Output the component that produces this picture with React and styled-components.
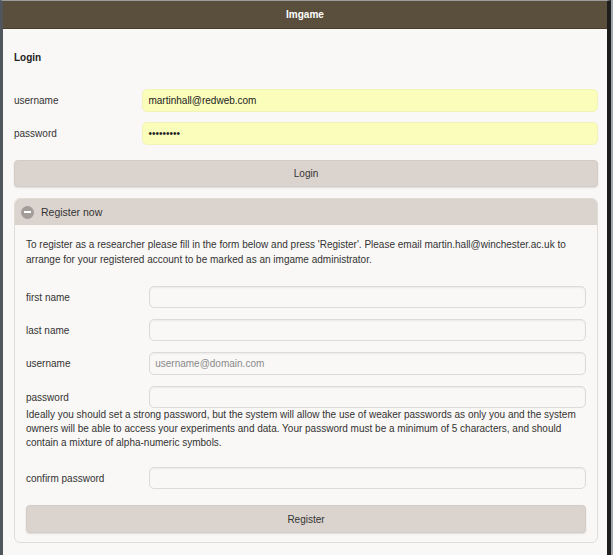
import React from "react";
import styled, { createGlobalStyle } from "styled-components";

const GlobalStyle = createGlobalStyle`
  html, body {
    margin: 0;
    padding: 0;
    background: #a4a9ae;
  }
  body {
    font-family: "Liberation Sans", Arial, sans-serif;
    color: #333;
  }
`;

const Window = styled.div`
  width: 604px;
  height: 554px;
  margin-right: 2px;
  border-top: 1px solid #9c9c9c;
  border-left: 3px solid #51565c;
  border-right: 4px solid #1d1d1d;
  background: #f9f8f6;
  display: flex;
  flex-direction: column;
  overflow: hidden;
`;

const TopBar = styled.header`
  height: 27px;
  background: #5a4f3c;
  border-bottom: 1px solid #463d2e;
  display: flex;
  align-items: center;
  justify-content: center;
  color: #fff;
  font-weight: bold;
  font-size: 10px;
`;

const Content = styled.main`
  padding: 22px 9px 0 11px;
  display: flex;
  flex-direction: column;
`;

const Heading = styled.h2`
  margin: 0 0 25px;
  font-size: 10px;
  line-height: 13px;
  font-weight: bold;
  color: #222;
`;

const Field = styled.div`
  display: flex;
  align-items: center;
  margin-bottom: ${p => p.$gap ?? 10}px;
`;

const Label = styled.label`
  width: 22%;
  flex-shrink: 0;
  font-size: 10px;
  color: #333;
`;

const Input = styled.input`
  flex: 1;
  min-width: 0;
  box-sizing: border-box;
  height: ${p => (p.$tall ? 23 : 22)}px;
  padding: 0 5px;
  font-family: inherit;
  font-size: 10px;
  color: #222;
  border-radius: 5px;
  outline: none;
  border: 1px solid ${p => (p.$filled ? "#f2f3b6" : "#dddbd8")};
  background: ${p => (p.$filled ? "#fbfdbb" : "#f9f8f6")};
  box-shadow: ${p => (p.$filled ? "none" : "inset 0 1px 2px rgba(0,0,0,0.06)")};

  &::placeholder {
    color: #8a8a8a;
  }
`;

const Button = styled.button`
  box-sizing: border-box;
  width: 100%;
  height: ${p => p.$h || 27}px;
  border: 1px solid #d3cbc5;
  border-radius: 4px;
  background: #dbd3ce;
  box-shadow: 0 1px 2px rgba(0, 0, 0, 0.12);
  font-family: inherit;
  font-size: 10px;
  color: #333;
  margin-top: ${p => p.$mt || 0}px;
`;

const Panel = styled.section`
  margin-top: 11px;
  border: 1px solid #e0ddd9;
  border-radius: 6px;
  overflow: hidden;
`;

const PanelHead = styled.div`
  height: 26px;
  background: #dbd3ce;
  display: flex;
  align-items: center;
  padding-left: 6px;
  gap: 7px;
  font-size: 10.5px;
  color: #333;
`;

const MinusIcon = styled.span`
  width: 13px;
  height: 13px;
  border-radius: 50%;
  background: #a29d98;
  position: relative;

  &::after {
    content: "";
    position: absolute;
    left: 3px;
    right: 3px;
    top: 5.5px;
    height: 2px;
    background: #fff;
  }
`;

const PanelBody = styled.div`
  padding: 12px 11px 9px;
  display: flex;
  flex-direction: column;
`;

const Text = styled.p`
  margin: ${p => p.$m || "0"};
  font-size: 10px;
  line-height: ${p => p.$lh || 15}px;
  color: #333;
`;

export default function App() {
  return (
    <>
      <GlobalStyle />
      <Window>
        <TopBar>Imgame</TopBar>
        <Content>
          <Heading>Login</Heading>
          <Field>
            <Label>username</Label>
            <Input $filled $tall defaultValue="martinhall@redweb.com" />
          </Field>
          <Field $gap={15}>
            <Label>password</Label>
            <Input $filled $tall type="password" defaultValue="password1" />
          </Field>
          <Button>Login</Button>

          <Panel>
            <PanelHead>
              <MinusIcon />
              Register now
            </PanelHead>
            <PanelBody>
              <Text $m="0 0 19px">
                To register as a researcher please fill in the form below and press 'Register'. Please email
                martin.hall@winchester.ac.uk to arrange for your registered account to be marked as an imgame
                administrator.
              </Text>
              <Field $gap={11}>
                <Label>first name</Label>
                <Input />
              </Field>
              <Field $gap={11}>
                <Label>last name</Label>
                <Input />
              </Field>
              <Field $gap={11}>
                <Label>username</Label>
                <Input $tall placeholder="username@domain.com" />
              </Field>
              <Field $gap={0}>
                <Label>password</Label>
                <Input type="password" />
              </Field>
              <Text $lh={14} $m="0 0 17px">
                Ideally you should set a strong password, but the system will allow the use of weaker passwords as
                only you and the system owners will be able to access your experiments and data. Your password must
                be a minimum of 5 characters, and should contain a mixture of alpha-numeric symbols.
              </Text>
              <Field $gap={0}>
                <Label>confirm password</Label>
                <Input type="password" />
              </Field>
              <Button $h={28} $mt={16}>Register</Button>
            </PanelBody>
          </Panel>
        </Content>
      </Window>
    </>
  );
}
